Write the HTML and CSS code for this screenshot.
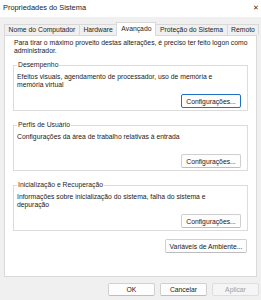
FILE: index.html
```html
<!DOCTYPE html>
<html lang="pt-BR">
  <head>
    <meta charset="UTF-8" />
    <title>Propriedades do Sistema</title>
    <link rel="stylesheet" href="styles.css">
  </head>
  <body>
    <div class="window">
      <div class="titlebar">
        <span class="title">Propriedades do Sistema</span>
        <span class="close">&#x2715;</span>
      </div>

      <div class="tabs">
        <div class="tab">Nome do Computador</div>
        <div class="tab">Hardware</div>
        <div class="tab active">Avançado</div>
        <div class="tab">Proteção do Sistema</div>
        <div class="tab">Remoto</div>
      </div>

      <div class="panel">
        <p class="note">Para tirar o máximo proveito destas alterações, é preciso ter feito logon como administrador.</p>

        <fieldset class="group">
          <legend>Desempenho</legend>
          <p class="desc">Efeitos visuais, agendamento de processador, uso de memória e memória virtual</p>
          <div class="row"><button class="btn default">Configurações...</button></div>
        </fieldset>

        <fieldset class="group">
          <legend>Perfis de Usuário</legend>
          <p class="desc">Configurações da área de trabalho relativas à entrada</p>
          <div class="row"><button class="btn">Configurações...</button></div>
        </fieldset>

        <fieldset class="group">
          <legend>Inicialização e Recuperação</legend>
          <p class="desc">Informações sobre inicialização do sistema, falha do sistema e depuração</p>
          <div class="row"><button class="btn">Configurações...</button></div>
        </fieldset>

        <div class="row env"><button class="btn wide">Variáveis de Ambiente...</button></div>
      </div>

      <div class="footer">
        <button class="btn small">OK</button>
        <button class="btn small">Cancelar</button>
        <button class="btn small" disabled>Aplicar</button>
      </div>
    </div>
  </body>
</html>
```

FILE: styles.css
```css
body {
  margin: 0;
  padding: 0;
  background-color: #f0f0f0;
  font-family: "Liberation Sans", Arial, sans-serif;
  font-size: 6.8px;
  color: #1a1a1a;
}

.window {
  width: 261px;
  height: 300px;
  display: flex;
  flex-direction: column;
}

.titlebar {
  height: 17px;
  background-color: #ffffff;
  display: flex;
  align-items: center;
  justify-content: space-between;
  padding: 0 2px 2px 3px;
  box-sizing: border-box;
}

.title {
  font-size: 7.4px;
  color: #1b1b1b;
}

.close {
  font-size: 7px;
  color: #333333;
}

.tabs {
  display: flex;
  align-items: flex-end;
  margin: 4px 4px 0 4px;
  height: 14px;
}

.tab {
  height: 10px;
  line-height: 10px;
  padding: 0 3.5px;
  border: 1px solid #d9d9d9;
  border-bottom: none;
  margin-right: -1px;
  background-color: #f0f0f0;
  color: #1f1f1f;
  white-space: nowrap;
}

.tab.active {
  height: 13px;
  line-height: 12px;
  background-color: #ffffff;
  position: relative;
  z-index: 1;
  margin-bottom: -1px;
  padding: 0 4px;
}

.panel {
  margin: 0 4px;
  height: 242px;
  background-color: #ffffff;
  border: 1px solid #d9d9d9;
  box-sizing: border-box;
  padding: 3px 8px 0 8px;
  display: flex;
  flex-direction: column;
}

.note {
  margin: 0 0 6px 1px;
  line-height: 8px;
}

.group {
  margin: 0 0 10px 0;
  padding: 4px 6px 6px 3px;
  border: 1px solid #dcdcdc;
  height: 50px;
  box-sizing: border-box;
}

.group legend {
  padding: 0 1px;
  margin-left: 0;
  line-height: 8px;
  color: #1f1f1f;
}

.desc {
  margin: 0;
  line-height: 8px;
  height: 16px;
  max-width: 205px;
}

.row {
  display: flex;
  justify-content: flex-end;
  margin-top: 5px;
}

.env {
  margin-top: -2px;
  margin-right: 1px;
}

.btn {
  font-family: inherit;
  font-size: 6.8px;
  height: 14px;
  padding: 0 3px;
  background-color: #fdfdfd;
  border: 1px solid #d0d0d0;
  border-bottom-color: #bdbdbd;
  border-radius: 2px;
  color: #1a1a1a;
  width: 60px;
  white-space: nowrap;
}

.btn.default {
  border: 1px solid #1f6fc4;
}

.btn.wide {
  width: 82px;
}

.footer {
  display: flex;
  justify-content: flex-end;
  gap: 5px;
  padding: 6px 2px 0 0;
}

.btn.small {
  width: 47px;
  height: 13px;
}

.btn:disabled {
  color: #9e9e9e;
  background-color: #f5f5f5;
  border-color: #dedede;
}
```
